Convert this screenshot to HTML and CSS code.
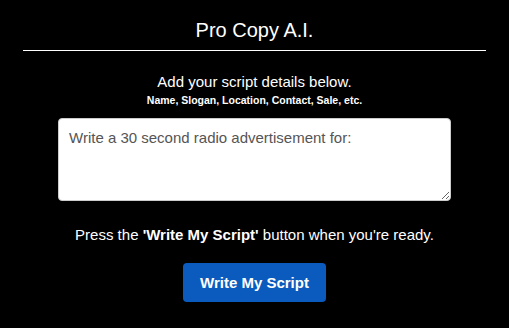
FILE: index.html
```html
<!DOCTYPE html>
<html lang="en">
<head>
    <meta charset="UTF-8">
    <meta name="viewport" content="width=device-width, initial-scale=1.0">
    <title>Pro Copy A.I.</title>
    <link rel="stylesheet" href="styles.css">
</head>
<body>
    <div class="container">
        <h1>Pro Copy A.I.</h1>
        <hr class="divider">
        <form id="script-form">
            <p class="intro">Add your script details below.</p>
            <p class="hint">Name, Slogan, Location, Contact, Sale, etc.</p>
            <textarea id="details" name="details" placeholder="Write a 30 second radio advertisement for:"></textarea>
            <p class="ready">Press the <strong>'Write My Script'</strong> button when you're ready.</p>
            <button type="submit">Write My Script</button>
        </form>
    </div>
</body>
</html>
```

FILE: styles.css
```css
body {
    font-family: 'Liberation Sans', Arial, sans-serif;
    background: #000000;
    color: #ffffff;
    margin: 0;
}

.container {
    padding: 0 23px;
    text-align: center;
}

h1 {
    font-size: 20px;
    font-weight: normal;
    margin: 0;
    padding-top: 19px;
    line-height: 23px;
}

.divider {
    border: none;
    border-top: 1px solid #ffffff;
    margin: 8px 0 0;
}

form {
    display: flex;
    flex-direction: column;
    align-items: center;
}

.intro {
    font-size: 15px;
    margin: 22px 0 0;
    line-height: 17px;
}

.hint {
    font-size: 10.5px;
    font-weight: bold;
    margin: 4px 0 0;
    line-height: 12px;
}

textarea {
    box-sizing: border-box;
    width: 393px;
    height: 83px;
    margin-top: 12px;
    padding: 10px 10px;
    border: 1px solid #cccccc;
    border-radius: 4px;
    font-family: 'Liberation Sans', Arial, sans-serif;
    font-size: 15px;
    color: #333333;
    resize: vertical;
}

textarea::placeholder {
    color: #555555;
}

.ready {
    font-size: 15px;
    margin: 25px 0 0;
    line-height: 17px;
}

button {
    margin-top: 20px;
    width: 143px;
    height: 39px;
    background-color: #0a5bbd;
    border: none;
    border-radius: 4px;
    color: #ffffff;
    font-family: 'Liberation Sans', Arial, sans-serif;
    font-size: 15px;
    font-weight: bold;
    cursor: pointer;
}
```
